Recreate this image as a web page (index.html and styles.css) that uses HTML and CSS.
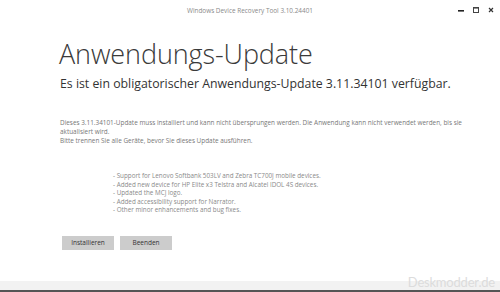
FILE: index.html
```html
<!DOCTYPE html>
<html lang="de">
<head>
<meta charset="utf-8">
<link rel="stylesheet" href="styles.css">
</head>
<body>
<div class="window">
  <div class="titlebar">
    <div class="title">Windows Device Recovery Tool 3.10.24401</div>
    <div class="controls">
      <svg width="8" height="8" viewBox="0 0 8 8"><rect x="1" y="4" width="6" height="1.6" fill="#222"/></svg>
      <svg width="8" height="8" viewBox="0 0 8 8"><rect x="1.5" y="1.5" width="5" height="5" fill="none" stroke="#444" stroke-width="1"/><rect x="1.5" y="1" width="5" height="1.6" fill="#444"/></svg>
      <svg width="8" height="8" viewBox="0 0 8 8"><path d="M2 2L6 6M6 2L2 6" stroke="#333" stroke-width="1.2"/></svg>
    </div>
  </div>
  <main class="content">
    <h1 class="heading">Anwendungs-Update</h1>
    <h2 class="subheading">Es ist ein obligatorischer Anwendungs-Update 3.11.34101 verfügbar.</h2>
    <p class="desc">Dieses 3.11.34101-Update muss installiert und kann nicht übersprungen werden. Die Anwendung kann nicht verwendet werden, bis sie aktualisiert wird.<br>Bitte trennen Sie alle Geräte, bevor Sie dieses Update ausführen.</p>
    <ul class="notes">
      <li>- Support for Lenovo Softbank 503LV and Zebra TC700J mobile devices.</li>
      <li>- Added new device for HP Elite x3 Telstra and Alcatel IDOL 4S devices.</li>
      <li>- Updated the MCJ logo.</li>
      <li>- Added accessibility support for Narrator.</li>
      <li>- Other minor enhancements and bug fixes.</li>
    </ul>
    <div class="buttons">
      <button class="btn">Installieren</button>
      <button class="btn">Beenden</button>
    </div>
  </main>
  <footer class="statusbar">
    <span class="watermark">Deskmodder.de</span>
  </footer>
</div>
</body>
</html>
```
FILE: styles.css
```css
html, body {
  margin: 0;
  padding: 0;
  background: #ffffff;
}
.window {
  width: 500px;
  height: 292px;
  display: flex;
  flex-direction: column;
  font-family: "Segoe UI", "Open Sans", "Noto Sans", sans-serif;
  color: #333;
  position: relative;
  overflow: hidden;
}
.titlebar {
  height: 20px;
  display: flex;
  align-items: center;
  justify-content: center;
  position: relative;
}
.title {
  font-size: 6.4px;
  color: #8a8a8a;
}
.controls {
  position: absolute;
  right: 5px;
  top: 6px;
  display: flex;
  gap: 7px;
}
.content {
  flex: 1;
  padding: 0 0 0 60px;
}
.heading {
  margin: 18px 0 0 -1px;
  font-size: 27px;
  font-weight: 300;
  line-height: 32px;
  color: #3a3a3a;
  letter-spacing: -0.1px;
}
.subheading {
  margin: 6px 0 0 0;
  font-size: 12.3px;
  font-weight: 400;
  line-height: 16px;
  color: #333;
}
.desc {
  margin: 26px 0 0 0;
  font-size: 6.4px;
  line-height: 9px;
  color: #777;
  width: 405px;
}
.notes {
  list-style: none;
  margin: 27px 0 0 53px;
  padding: 0;
  font-size: 6.3px;
  line-height: 8.5px;
  color: #8a8a8a;
}
.buttons {
  margin: 21px 0 0 2px;
  display: flex;
  gap: 6px;
}
.btn {
  width: 52px;
  height: 14px;
  border: none;
  background: #cccccc;
  font-family: "Segoe UI", "Open Sans", "Noto Sans", sans-serif;
  font-size: 6.5px;
  color: #333;
  padding: 0;
}
.statusbar {
  height: 9px;
  background: #f2f2f2;
  border-bottom: 2px solid #555;
  position: relative;
}
.watermark {
  position: absolute;
  right: 5px;
  bottom: 0;
  font-size: 13px;
  line-height: 15px;
  color: #dcdcdc;
  font-family: "Lato", sans-serif;
  letter-spacing: -0.2px;
}
```
